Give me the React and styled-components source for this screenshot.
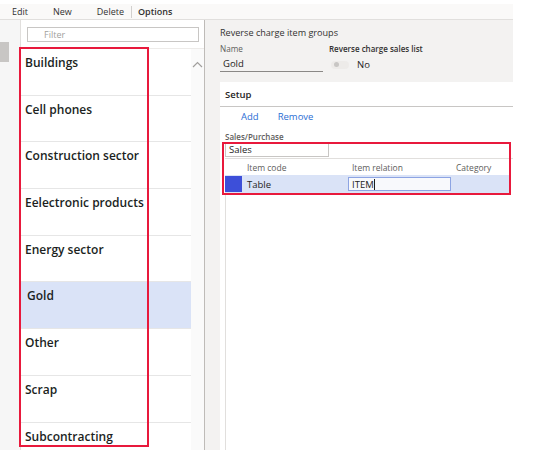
import React from 'react'
import styled, { createGlobalStyle } from 'styled-components'

const groups = [
  'Buildings',
  'Cell phones',
  'Construction sector',
  'Eelectronic products',
  'Energy sector',
  'Gold',
  'Other',
  'Scrap',
  'Subcontracting',
]

const App = () => {
  return (
    <>
      <GlobalStyle />
      <Frame>
        <ActionBar>
          <Action>Edit</Action>
          <Action>New</Action>
          <Action>Delete</Action>
          <Divider />
          <Action bold>Options</Action>
        </ActionBar>
        <Body>
          <LeftStrip>
            <Thumb />
          </LeftStrip>
          <ListPanel>
            <FilterWrap>
              <Filter>Filter</Filter>
            </FilterWrap>
            <ListArea>
              <Items>
                {groups.map((g) => (
                  <Item key={g} selected={g === 'Gold'}>
                    {g}
                  </Item>
                ))}
              </Items>
              <ScrollTrack>
                <svg width="11" height="7" viewBox="0 0 11 7">
                  <path d="M1 6 L5.5 1.5 L10 6" fill="none" stroke="#a19f9d" strokeWidth="1.2" />
                </svg>
              </ScrollTrack>
            </ListArea>
            <Annotation style={{ left: -2, top: 27, width: 130, height: 400 }} />
          </ListPanel>
          <Detail>
            <Title>Reverse charge item groups</Title>
            <Fields>
              <Field>
                <Label>Name</Label>
                <NameValue>Gold</NameValue>
              </Field>
              <Field>
                <Label bold>Reverse charge sales list</Label>
                <ToggleRow>
                  <Toggle>
                    <Knob />
                  </Toggle>
                  <span>No</span>
                </ToggleRow>
              </Field>
            </Fields>
            <Card>
              <CardHeader>Setup</CardHeader>
              <Toolbar>
                <LinkButton>Add</LinkButton>
                <LinkButton>Remove</LinkButton>
              </Toolbar>
              <GridBlock>
                <SmallLabel>Sales/Purchase</SmallLabel>
                <SalesRow>
                  <SalesInput>Sales</SalesInput>
                </SalesRow>
                <GridHead>
                  <Cell w={22} />
                  <Cell w={105}>Item code</Cell>
                  <Cell w={104}>Item relation</Cell>
                  <Cell>Category</Cell>
                </GridHead>
                <GridRow>
                  <Marker />
                  <Cell w={101}>Table</Cell>
                  <EditBox>
                    ITEM<Caret />
                  </EditBox>
                </GridRow>
                <GridEmpty />
                <Annotation style={{ left: 2, top: 15, width: 289, height: 53 }} />
              </GridBlock>
            </Card>
          </Detail>
        </Body>
      </Frame>
    </>
  )
}

const GlobalStyle = createGlobalStyle`
body{
  margin:0;
  background:#fff;
  font-family:"Open Sans", "Noto Sans", sans-serif;
  color:#252423;
}
`

const Frame = styled.div`
width:513px;
height:450px;
padding-top:4px;
box-sizing:border-box;
display:flex;
flex-direction:column;
`

const ActionBar = styled.div`
height:15px;
background:#faf9f8;
border-bottom:1px solid #e1dfdd;
display:flex;
align-items:center;
padding-left:12px;
font-size:9px;
`

const Action = styled.span`
color:#323130;
font-weight:${(p) => (p.bold ? 600 : 400)};
margin-right:${(p) => (p.bold ? 0 : 25)}px;
`

const Divider = styled.span`
width:1px;
height:12px;
background:#d2d0ce;
margin:0 6px 0 -18px;
`

const Body = styled.div`
flex:1;
display:flex;
min-height:0;
`

const LeftStrip = styled.div`
width:20px;
background:#f6f6f6;
padding-top:22px;
box-sizing:border-box;
`

const Thumb = styled.div`
width:9px;
height:20px;
background:#c8c6c4;
`

const ListPanel = styled.div`
position:relative;
width:185px;
background:#fff;
border-left:1px solid #e1dfdd;
border-right:1px solid #bebbb8;
display:flex;
flex-direction:column;
box-sizing:border-box;
`

const FilterWrap = styled.div`
padding:7px 5px 6px 6px;
`

const Filter = styled.div`
height:15px;
border:1px solid #c8c6c4;
box-sizing:border-box;
font-size:9px;
color:#a19f9d;
padding-left:16px;
line-height:13px;
`

const ListArea = styled.div`
flex:1;
display:flex;
border-top:1px solid #edebe9;
`

const Items = styled.div`
width:170px;
`

const Item = styled.div`
height:46.7px;
box-sizing:border-box;
border-bottom:1px solid #e6e6e6;
padding:5px 0 0 ${(p) => (p.selected ? 6 : 4)}px;
font-size:12px;
line-height:18px;
font-weight:600;
color:#201f1e;
background:${(p) => (p.selected ? '#dae3f7' : '#fff')};
`

const ScrollTrack = styled.div`
width:13px;
background:#fafafa;
display:flex;
justify-content:center;
padding-top:12px;
box-sizing:border-box;
`

const Annotation = styled.div`
position:absolute;
border:2px solid #e8193c;
box-sizing:border-box;
pointer-events:none;
`

const Detail = styled.div`
flex:1;
background:#f3f2f1;
padding:6px 0 0 15px;
display:flex;
flex-direction:column;
`

const Title = styled.div`
font-size:9.1px;
line-height:14px;
color:#323130;
`

const Fields = styled.div`
display:flex;
gap:6px;
margin-top:3px;
`

const Field = styled.div`
display:flex;
flex-direction:column;
`

const Label = styled.div`
font-size:${(p) => (p.bold ? 8 : 8.2)}px;
line-height:12px;
color:${(p) => (p.bold ? '#323130' : '#605e5c')};
font-weight:${(p) => (p.bold ? 600 : 400)};
`

const NameValue = styled.div`
width:103px;
height:17px;
border-bottom:1px solid #8a8886;
font-size:9.5px;
line-height:17px;
padding-left:3px;
box-sizing:border-box;
`

const ToggleRow = styled.div`
display:flex;
align-items:center;
gap:8px;
font-size:9.5px;
padding:3px 0 0 2px;
`

const Toggle = styled.div`
width:18px;
height:8px;
border-radius:4px;
background:#edebe9;
display:flex;
align-items:center;
padding-left:3px;
box-sizing:border-box;
`

const Knob = styled.div`
width:5px;
height:5px;
border-radius:50%;
background:#c8c6c4;
`

const Card = styled.div`
flex:1;
margin-top:10px;
background:#fff;
display:flex;
flex-direction:column;
`

const CardHeader = styled.div`
height:25px;
border-bottom:1px solid #c8c6c4;
font-size:9.5px;
font-weight:600;
padding:6px 0 0 5px;
box-sizing:border-box;
`

const Toolbar = styled.div`
display:flex;
gap:19px;
padding:3px 0 0 21px;
height:20px;
box-sizing:border-box;
`

const LinkButton = styled.span`
font-size:9.5px;
color:#2b6ed4;
line-height:14px;
`

const GridBlock = styled.div`
position:relative;
flex:1;
display:flex;
flex-direction:column;
padding-left:5px;
`

const SmallLabel = styled.div`
font-size:8px;
font-weight:600;
color:#605e5c;
line-height:11px;
margin-top:4px;
`

const SalesRow = styled.div`
height:16px;
border-bottom:1px solid #e1dfdd;
`

const SalesInput = styled.div`
width:104px;
height:15px;
border:1px solid #c8c6c4;
box-sizing:border-box;
font-size:9.5px;
line-height:13px;
padding-left:3px;
`

const GridHead = styled.div`
display:flex;
height:16px;
align-items:center;
font-size:8.5px;
color:#605e5c;
`

const Cell = styled.div`
width:${(p) => (p.w ? `${p.w}px` : 'auto')};
flex-shrink:0;
`

const GridRow = styled.div`
display:flex;
align-items:center;
height:18px;
background:#dae3f7;
width:286px;
font-size:9.5px;
`

const Marker = styled.div`
width:17px;
height:16px;
background:#3d4fd9;
margin-right:5px;
`

const EditBox = styled.div`
width:103px;
height:14px;
border:1px solid #8da4e3;
background:#f8f9fc;
box-sizing:border-box;
display:flex;
align-items:center;
padding-left:3px;
font-size:9.5px;
`

const Caret = styled.span`
width:1px;
height:11px;
background:#201f1e;
`

const GridEmpty = styled.div`
flex:1;
border-left:1px solid #e1dfdd;
margin-top:2px;
`

export default App
